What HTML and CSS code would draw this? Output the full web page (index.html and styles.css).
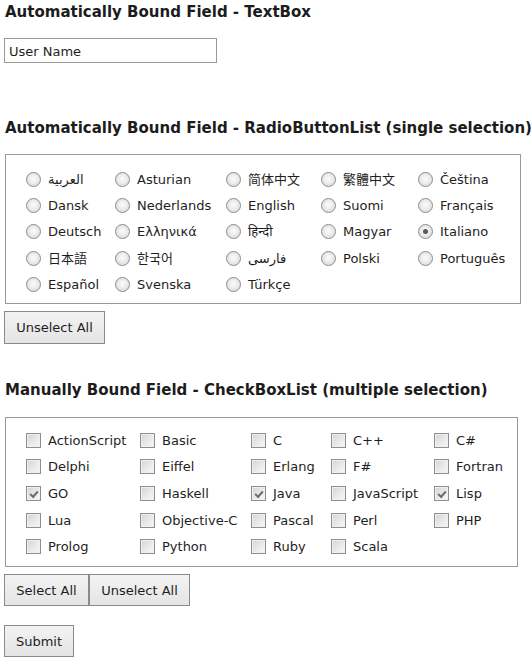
FILE: index.html
```html
<!DOCTYPE html>
<html>
<head>
<meta charset="utf-8">
<title>Bound Fields</title>
<link rel="stylesheet" href="styles.css">
</head>
<body>
<div class="page">
  <h3 class="heading heading-first">Automatically Bound Field - TextBox</h3>
  <input class="textbox" type="text" value="User Name">

  <h3 class="heading heading-radio">Automatically Bound Field - RadioButtonList (single selection)</h3>
  <div class="choice-box radio-box">
    <label class="choice"><input type="radio" name="lang" class="radio"><span>العربية</span></label>
    <label class="choice"><input type="radio" name="lang" class="radio"><span>Asturian</span></label>
    <label class="choice"><input type="radio" name="lang" class="radio"><span>简体中文</span></label>
    <label class="choice"><input type="radio" name="lang" class="radio"><span>繁體中文</span></label>
    <label class="choice"><input type="radio" name="lang" class="radio"><span>Čeština</span></label>

    <label class="choice"><input type="radio" name="lang" class="radio"><span>Dansk</span></label>
    <label class="choice"><input type="radio" name="lang" class="radio"><span>Nederlands</span></label>
    <label class="choice"><input type="radio" name="lang" class="radio"><span>English</span></label>
    <label class="choice"><input type="radio" name="lang" class="radio"><span>Suomi</span></label>
    <label class="choice"><input type="radio" name="lang" class="radio"><span>Français</span></label>

    <label class="choice"><input type="radio" name="lang" class="radio"><span>Deutsch</span></label>
    <label class="choice"><input type="radio" name="lang" class="radio"><span>Ελληνικά</span></label>
    <label class="choice"><input type="radio" name="lang" class="radio"><span>हिन्दी</span></label>
    <label class="choice"><input type="radio" name="lang" class="radio"><span>Magyar</span></label>
    <label class="choice"><input type="radio" name="lang" class="radio" checked><span>Italiano</span></label>

    <label class="choice"><input type="radio" name="lang" class="radio"><span>日本語</span></label>
    <label class="choice"><input type="radio" name="lang" class="radio"><span>한국어</span></label>
    <label class="choice"><input type="radio" name="lang" class="radio"><span>فارسی</span></label>
    <label class="choice"><input type="radio" name="lang" class="radio"><span>Polski</span></label>
    <label class="choice"><input type="radio" name="lang" class="radio"><span>Português</span></label>

    <label class="choice"><input type="radio" name="lang" class="radio"><span>Español</span></label>
    <label class="choice"><input type="radio" name="lang" class="radio"><span>Svenska</span></label>
    <label class="choice"><input type="radio" name="lang" class="radio"><span>Türkçe</span></label>
  </div>
  <div class="button-row button-row-radio">
    <button class="btn btn-unselect" type="button">Unselect All</button>
  </div>

  <h3 class="heading heading-check">Manually Bound Field - CheckBoxList (multiple selection)</h3>
  <div class="choice-box check-box">
    <label class="choice"><input type="checkbox" class="check"><span>ActionScript</span></label>
    <label class="choice"><input type="checkbox" class="check"><span>Basic</span></label>
    <label class="choice"><input type="checkbox" class="check"><span>C</span></label>
    <label class="choice"><input type="checkbox" class="check"><span>C++</span></label>
    <label class="choice"><input type="checkbox" class="check"><span>C#</span></label>

    <label class="choice"><input type="checkbox" class="check"><span>Delphi</span></label>
    <label class="choice"><input type="checkbox" class="check"><span>Eiffel</span></label>
    <label class="choice"><input type="checkbox" class="check"><span>Erlang</span></label>
    <label class="choice"><input type="checkbox" class="check"><span>F#</span></label>
    <label class="choice"><input type="checkbox" class="check"><span>Fortran</span></label>

    <label class="choice"><input type="checkbox" class="check" checked><span>GO</span></label>
    <label class="choice"><input type="checkbox" class="check"><span>Haskell</span></label>
    <label class="choice"><input type="checkbox" class="check" checked><span>Java</span></label>
    <label class="choice"><input type="checkbox" class="check"><span>JavaScript</span></label>
    <label class="choice"><input type="checkbox" class="check" checked><span>Lisp</span></label>

    <label class="choice"><input type="checkbox" class="check"><span>Lua</span></label>
    <label class="choice"><input type="checkbox" class="check"><span>Objective-C</span></label>
    <label class="choice"><input type="checkbox" class="check"><span>Pascal</span></label>
    <label class="choice"><input type="checkbox" class="check"><span>Perl</span></label>
    <label class="choice"><input type="checkbox" class="check"><span>PHP</span></label>

    <label class="choice"><input type="checkbox" class="check"><span>Prolog</span></label>
    <label class="choice"><input type="checkbox" class="check"><span>Python</span></label>
    <label class="choice"><input type="checkbox" class="check"><span>Ruby</span></label>
    <label class="choice"><input type="checkbox" class="check"><span>Scala</span></label>
  </div>
  <div class="button-row button-row-check">
    <button class="btn btn-select" type="button">Select All</button>
    <button class="btn btn-unselect" type="button">Unselect All</button>
  </div>
  <div class="button-row button-row-submit">
    <button class="btn btn-submit" type="submit">Submit</button>
  </div>
</div>
</body>
</html>
```
FILE: styles.css
```css
html, body {
  margin: 0;
  padding: 0;
  background: #ffffff;
}

body {
  font-family: "DejaVu Sans", "Noto Sans CJK SC", "Noto Sans", sans-serif;
  font-size: 13px;
  color: #1e1e1e;
}

.page {
  padding-left: 4px;
}

.heading {
  margin: 0;
  padding-left: 1px;
  font-size: 15px;
  line-height: 18px;
  font-weight: bold;
  color: #1c1c1c;
  white-space: nowrap;
}

.heading-first { margin-top: 3px; }
.heading-radio { margin-top: 56px; }
.heading-check { margin-top: 37px; }

.textbox {
  display: block;
  margin: 17px 0 0 0;
  box-sizing: border-box;
  width: 213px;
  height: 25px;
  border: 1px solid #9a9a9a;
  padding: 1px 4px 0 4px;
  font-family: inherit;
  font-size: 13px;
  color: #1e1e1e;
  background: #fff;
  outline: none;
}

.choice-box {
  box-sizing: border-box;
  margin-left: 1px;
  border: 1px solid #9a9a9a;
  display: grid;
  align-items: center;
  padding-left: 20px;
}

.radio-box {
  margin-top: 17px;
  width: 516px;
  height: 150px;
  padding-top: 11px;
  grid-template-columns: 89px 111px 95px 97px auto;
  grid-auto-rows: 26.3px;
  align-content: start;
}

.check-box {
  margin-top: 18px;
  width: 513px;
  height: 150px;
  padding-top: 9px;
  grid-template-columns: 114px 111px 80px 103px auto;
  grid-auto-rows: 26.6px;
  align-content: start;
}

.choice {
  display: flex;
  align-items: center;
  white-space: nowrap;
  line-height: 16px;
}

.choice span {
  padding-top: 1px;
}

.radio,
.check {
  -webkit-appearance: none;
  appearance: none;
  flex: none;
  margin: 0 7px 0 0;
  width: 15px;
  height: 15px;
  box-sizing: border-box;
  border: 1px solid #8c8c8c;
  position: relative;
}

.radio {
  border-radius: 50%;
  background: radial-gradient(circle at 50% 45%, #fbfbfb 0%, #ececec 45%, #cbcbcb 100%);
  box-shadow: inset 0 0 0 1px #e6e6e6;
}

.radio:checked::after {
  content: "";
  position: absolute;
  left: 4px;
  top: 4px;
  width: 5px;
  height: 5px;
  border-radius: 50%;
  background: #5a5a5a;
}

.check {
  border-color: #8f8f8f;
  background: linear-gradient(135deg, #d2d2d2 0%, #e8e8e8 50%, #f8f8f8 100%);
  box-shadow: inset 0 0 0 1px #f0f0f0;
}

.check:checked::after {
  content: "";
  position: absolute;
  left: 3px;
  top: 2px;
  width: 6px;
  height: 3px;
  border-left: 2px solid #6e6e6e;
  border-bottom: 2px solid #6e6e6e;
  transform: translate(0, 2px) rotate(-48deg);
}

.button-row {
  display: flex;
}

.button-row-radio { margin-top: 7px; }
.button-row-check { margin-top: 7px; }
.button-row-submit { margin-top: 19px; }

.btn {
  box-sizing: border-box;
  margin: 0;
  border: 1px solid #8a8a8a;
  border-radius: 0;
  background: linear-gradient(#f3f3f3, #e4e4e4);
  font-family: inherit;
  font-size: 13px;
  color: #1e1e1e;
  padding: 0;
  height: 32px;
}

.button-row-radio .btn { height: 33px; }

.btn-unselect { width: 101px; }
.btn-select { width: 85px; }
.btn-submit { width: 70px; }
```
